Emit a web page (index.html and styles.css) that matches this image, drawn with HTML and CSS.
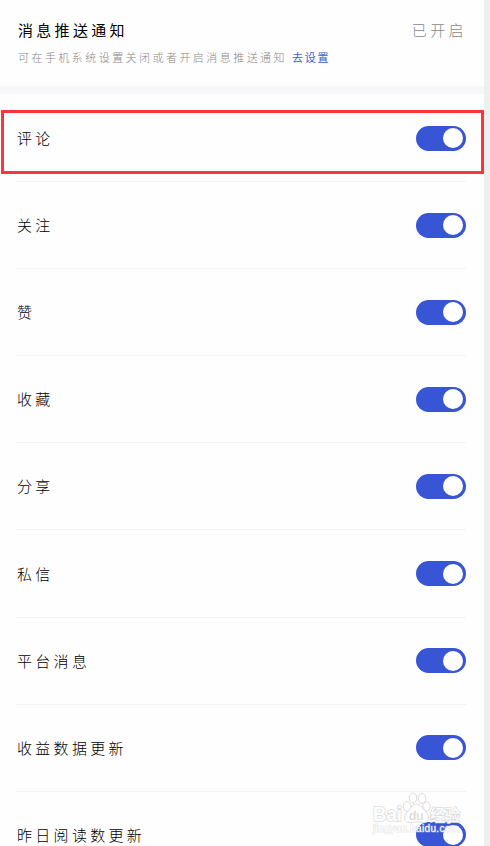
FILE: index.html
```
<!DOCTYPE html>
<html lang="zh-CN">
<head>
    <meta charset="UTF-8">
    <meta name="viewport" content="width=device-width, initial-scale=1.0">
    <title>消息推送通知</title>
    <link rel="stylesheet" href="styles.css">
</head>
<body>
    <main class="screen">
        <header class="push-header">
            <div class="push-title">
                <h1>消息推送通知</h1>
                <span class="status">已开启</span>
            </div>
            <p class="hint">可在手机系统设置关闭或者开启消息推送通知<a href="#" class="hint-link">去设置</a></p>
        </header>

        <ul class="settings">
            <li class="row"><span class="label">评论</span><span class="switch"></span></li>
            <li class="row"><span class="label">关注</span><span class="switch"></span></li>
            <li class="row"><span class="label">赞</span><span class="switch"></span></li>
            <li class="row"><span class="label">收藏</span><span class="switch"></span></li>
            <li class="row"><span class="label">分享</span><span class="switch"></span></li>
            <li class="row"><span class="label">私信</span><span class="switch"></span></li>
            <li class="row"><span class="label">平台消息</span><span class="switch"></span></li>
            <li class="row"><span class="label">收益数据更新</span><span class="switch"></span></li>
            <li class="row"><span class="label">昨日阅读数更新</span><span class="switch"></span></li>
        </ul>

        <div class="highlight"></div>

        <!-- Watermark -->
        <svg class="watermark" width="100" height="50" viewBox="0 0 100 50">
            <g class="wm-outline">
                <text x="3" y="31" class="wm-name" textLength="29" lengthAdjust="spacingAndGlyphs">Bai</text>
                <ellipse cx="37" cy="16.500" rx="3.800" ry="4.800"/>
                <ellipse cx="43" cy="8" rx="3.800" ry="5"/>
                <ellipse cx="52" cy="8.500" rx="3.800" ry="5"/>
                <ellipse cx="56.500" cy="16.500" rx="3.600" ry="4.800"/>
                <path d="M46.500 14c3.500 0 5 2.500 7 5s5 4.500 5 9c0 4-3 5-6 4.500-4-.8-8-.8-12 0-3 .5-6-1-6-5 0-4 3.500-5.500 5.500-8.500 1.500-2.500 3-5 6.500-5z"/>
                <text x="60" y="31" class="wm-cn" textLength="30" lengthAdjust="spacingAndGlyphs">经验</text>
            </g>
            <text x="39" y="30" class="wm-du">du</text>
            <text x="3" y="42" class="wm-url" textLength="86" lengthAdjust="spacing">jingyan.baidu.com</text>
        </svg>
    </main>
</body>
</html>
```
FILE: styles.css
```
* {
    margin: 0;
    padding: 0;
    box-sizing: border-box;
}

body {
    height: 846px;
    overflow: hidden;
    background: #efefef;
    font-family: "Noto Sans CJK SC", sans-serif;
    font-weight: 300;
}

.screen {
    position: relative;
    width: 484px;
    height: 846px;
    overflow: hidden;
    background: #fefefe;
}

/* Header */
.push-header {
    height: 94px;
    padding: 19px 17px 0 18px;
    border-bottom: 8px solid #f7f7fa;
}

.push-title {
    display: flex;
    justify-content: space-between;
    line-height: 22px;
}

h1 {
    font-size: 15px;
    font-weight: 400;
    letter-spacing: 3.300px;
    color: #000;
}

.status {
    font-size: 15px;
    letter-spacing: 3.400px;
    color: #888;
}

.hint {
    margin-top: 7px;
    font-size: 11px;
    line-height: 18px;
    letter-spacing: 2.450px;
    white-space: nowrap;
    color: #888;
}

.hint-link {
    margin-left: 5px;
    font-weight: 400;
    letter-spacing: 1.700px;
    color: #3a5bd9;
    text-decoration: none;
}

/* Notification switches */
.settings {
    padding: 1px 18px 0 15px;
    list-style: none;
}

.row {
    display: flex;
    align-items: center;
    justify-content: space-between;
    height: 87.100px;
    padding-left: 2px;
    border-bottom: 1px solid #f3f3f3;
}

.label {
    font-size: 15px;
    line-height: 22px;
    letter-spacing: 3.300px;
    color: #000;
}

.switch {
    display: flex;
    align-items: center;
    justify-content: flex-end;
    width: 50px;
    height: 25px;
    padding-right: 3px;
    border-radius: 13px;
    background: #3855d5;
}

.switch::after {
    content: '';
    width: 20px;
    height: 20px;
    border-radius: 50%;
    background: #fefefe;
}

/* Marked row */
.highlight {
    position: absolute;
    top: 110px;
    left: 1px;
    width: 483px;
    height: 64px;
    border: 3px solid #fb3539;
}

/* Watermark */
.watermark {
    position: absolute;
    top: 790px;
    left: 370px;
    font-family: "Liberation Sans", "Noto Sans CJK SC", sans-serif;
}

.wm-outline {
    fill: #fefefe;
    stroke: #dcdcdc;
    stroke-width: 1;
}

.wm-name {
    font-size: 21px;
    font-weight: 700;
    stroke-width: 1.600;
    paint-order: stroke;
}

.wm-cn {
    font-size: 16px;
    font-weight: 500;
    stroke-width: 1.600;
    paint-order: stroke;
}

.wm-du {
    font-size: 13px;
    font-weight: 400;
    fill: #d4d4d4;
}

.wm-url {
    font-size: 10px;
    font-weight: 400;
    fill: #fff;
    stroke: #d0d0d0;
    stroke-width: 1.200;
    paint-order: stroke;
    stroke-opacity: 0.5;
}
```
